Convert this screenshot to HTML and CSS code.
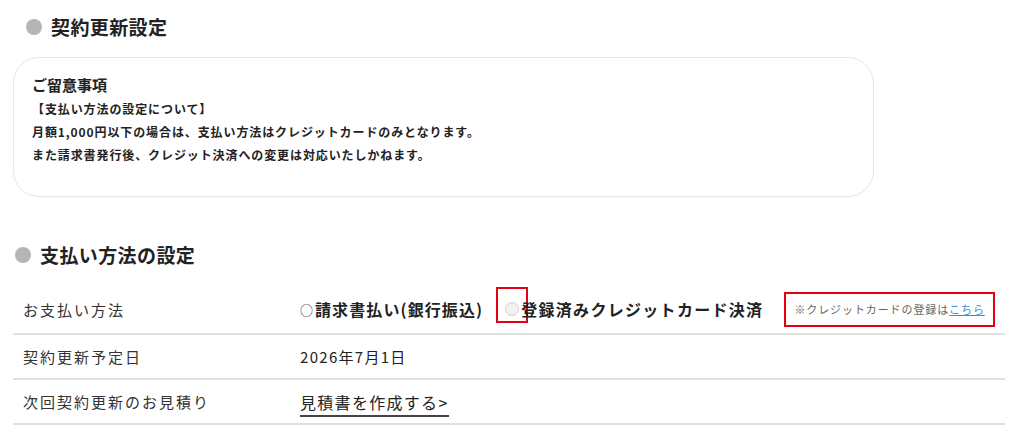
FILE: index.html
```html
<!DOCTYPE html>
<html lang="ja">
  <head>
    <meta charset="UTF-8" />
    <meta name="viewport" content="width=device-width, initial-scale=1.0" />
    <title>契約更新設定</title>
    <link rel="stylesheet" href="styles.css">
  </head>
  <body>
    <div class="page">
      <h2 class="heading heading-first"><span class="dot"></span>契約更新設定</h2>
      <div class="notice">
        <div class="notice-title">ご留意事項</div>
        <div class="notice-sub">【支払い方法の設定について】</div>
        <p>月額1,000円以下の場合は、支払い方法はクレジットカードのみとなります。</p>
        <p>また請求書発行後、クレジット決済への変更は対応いたしかねます。</p>
      </div>

      <h2 class="heading heading-second"><span class="dot"></span>支払い方法の設定</h2>
      <div class="table">
        <div class="row row-pay">
          <div class="label">お支払い方法</div>
          <div class="value pay-options">
            <span class="option"><span class="circle">○</span>請求書払い(銀行振込)</span>
            <span class="radio-box"><span class="radio"></span></span>
            <span class="option option-card">登録済みクレジットカード決済</span>
            <span class="note">※クレジットカードの登録は<a href="#">こちら</a></span>
          </div>
        </div>
        <div class="row">
          <div class="label">契約更新予定日</div>
          <div class="value">2026年7月1日</div>
        </div>
        <div class="row">
          <div class="label">次回契約更新のお見積り</div>
          <div class="value"><a class="quote" href="#">見積書を作成する&gt;</a></div>
        </div>
      </div>
    </div>
  </body>
</html>
```

FILE: styles.css
```css
body {
  margin: 0;
  padding: 0;
  background: #fff;
  color: #222;
  font-family: "Noto Sans CJK JP", "Noto Sans", sans-serif;
}
.page {
  width: 992px;
  padding: 12px 0 0 13px;
}
.heading {
  display: flex;
  align-items: center;
  margin: 0;
  font-size: 19px;
  font-weight: 700;
  letter-spacing: 0.4px;
  line-height: 30px;
  height: 30px;
}
.heading .dot {
  width: 16px;
  height: 16px;
  border-radius: 50%;
  background: #b5b5b5;
  margin-right: 9px;
}
.heading-first {
  padding-left: 13px;
}
.heading-second {
  margin-top: 43px;
  padding-left: 2px;
}
.notice {
  box-sizing: border-box;
  width: 861px;
  height: 140px;
  margin-top: 15px;
  border: 1px solid #e6e6e6;
  border-radius: 26px;
  padding: 15px 18px;
}
.notice-title {
  font-size: 15px;
  font-weight: 700;
  line-height: 24px;
}
.notice-sub,
.notice p {
  margin: 0;
  font-size: 12px;
  font-weight: 700;
  line-height: 23px;
  letter-spacing: 0.9px;
}
.table {
  margin-top: 15px;
}
.row {
  display: flex;
  align-items: center;
  height: 43px;
  border-bottom: 2px solid #e0e0e0;
}
.row-pay {
  height: 48px;
}
.label {
  width: 277px;
  padding-left: 10px;
  font-size: 15px;
  letter-spacing: 2px;
  color: #333;
}
.value {
  font-size: 15px;
  letter-spacing: 1.3px;
  color: #222;
}
.pay-options {
  display: flex;
  align-items: center;
  letter-spacing: 0;
}
.option {
  display: flex;
  align-items: center;
  font-size: 16px;
  font-weight: 700;
  letter-spacing: 1.1px;
}
.option .circle {
  display: inline-block;
  width: 15px;
  font-size: 13px;
  font-weight: 400;
  color: #333;
  letter-spacing: 0;
}
.option-card {
  letter-spacing: 1.3px;
}
.radio-box {
  display: flex;
  align-items: center;
  justify-content: center;
  box-sizing: border-box;
  width: 32px;
  height: 36px;
  margin: 0 -7px 8px 13px;
  border: 2px solid #e60012;
}
.radio {
  width: 12px;
  height: 12px;
  margin-top: 8px;
  border-radius: 50%;
  border: 1px solid #d0d0d0;
  background: #f2f2f2;
}
.note {
  box-sizing: border-box;
  display: flex;
  align-items: center;
  height: 35px;
  margin-left: 21px;
  padding: 0 8px;
  border: 2px solid #e60012;
  font-size: 11px;
  letter-spacing: 0.9px;
  color: #666;
}
.note a {
  color: #3d8fd1;
}
.quote {
  color: #222;
  font-size: 16px;
  text-decoration: none;
  border-bottom: 2px solid #444;
  padding-bottom: 1px;
}
```
